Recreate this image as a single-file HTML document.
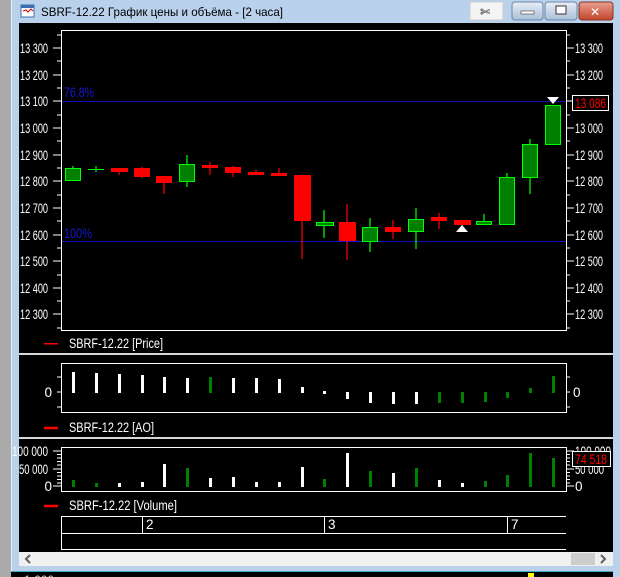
<!DOCTYPE html>
<html><head><meta charset="utf-8"><style>
html,body{margin:0;padding:0;background:#000;width:620px;height:577px;overflow:hidden}
svg{display:block}
text{font-family:"Liberation Sans","DejaVu Sans",sans-serif;font-size:12px}
.n{font-size:13.5px}
</style></head><body>
<svg width="620" height="577" viewBox="0 0 620 577" xmlns="http://www.w3.org/2000/svg">
<defs><linearGradient id="tb" x1="0" y1="0" x2="0" y2="1"><stop offset="0" stop-color="#c6d9ee"/><stop offset="1" stop-color="#b8d0ea"/></linearGradient>
<linearGradient id="bt" x1="0" y1="0" x2="0" y2="1"><stop offset="0" stop-color="#e8eef6"/><stop offset="1" stop-color="#a9bfd9"/></linearGradient>
<linearGradient id="cl" x1="0" y1="0" x2="0" y2="1"><stop offset="0" stop-color="#e8a090"/><stop offset="1" stop-color="#c2442c"/></linearGradient></defs>
<rect x="0" y="0" width="620" height="577" fill="#000"/>
<rect x="0" y="0" width="620" height="23" fill="url(#tb)"/>
<rect x="11" y="0" width="602" height="572" fill="#b9d1ea"/>
<rect x="0" y="0" width="11" height="577" fill="#ababab"/>
<rect x="11" y="0" width="1" height="572" fill="#e8f0f8"/>
<rect x="613" y="0" width="7" height="577" fill="#b9d1ea"/>
<rect x="11" y="571" width="602" height="1" fill="#3aa8c8"/>
<rect x="11" y="572" width="602" height="5" fill="#000"/>
<rect x="19" y="23" width="594" height="529" fill="#000"/>
<!-- title -->
<rect x="21" y="5" width="13" height="12" fill="#fff" stroke="#3a6fb0"/><rect x="21" y="5" width="13" height="3" fill="#3a6fb0"/>
<polyline points="23,11 26,10 28,12 31,9 33,11" fill="none" stroke="#d00" stroke-width="1"/>
<text x="41" y="16" fill="#000" textLength="242" lengthAdjust="spacingAndGlyphs">SBRF-12.22 График цены и объёма - [2 часа]</text>
<rect x="470" y="2" width="33" height="18" fill="#f4f4f4" stroke="#ccc"/>
<text x="480" y="16" fill="#000" font-size="12">✄</text>
<rect x="512" y="2" width="31" height="18" rx="3" fill="url(#bt)" stroke="#6d88a8"/><rect x="521" y="11" width="13" height="3" fill="#fff" stroke="#333" stroke-width="0.6"/>
<rect x="545" y="2" width="32" height="18" rx="3" fill="url(#bt)" stroke="#6d88a8"/><rect x="556" y="6" width="10" height="8" fill="#fff" stroke="#333"/>
<rect x="579" y="2" width="34" height="18" rx="3" fill="url(#cl)" stroke="#8a3020"/><text x="590" y="16" fill="#fff" font-weight="bold" font-size="12">✕</text>
<!-- main chart -->
<rect x="61.5" y="30.5" width="505" height="300" fill="none" stroke="#fff"/>
<g stroke="#fff">
<path d="M53 48h8M53 75h8M53 101h8M53 128h8M53 155h8M53 181h8M53 208h8M53 235h8M53 261h8M53 288h8M53 314h8M57 35h4M57 61h4M57 88h4M57 115h4M57 141h4M57 168h4M57 195h4M57 221h4M57 248h4M57 275h4M57 301h4M57 328h4"/>
<path d="M566 48h8M566 75h8M566 101h8M566 128h8M566 155h8M566 181h8M566 208h8M566 235h8M566 261h8M566 288h8M566 314h8M566 35h4M566 61h4M566 88h4M566 115h4M566 141h4M566 168h4M566 195h4M566 221h4M566 248h4M566 275h4M566 301h4M566 328h4"/>
</g>
<g fill="#fff" class="n">
<text class="n" x="20" y="53" textLength="28" lengthAdjust="spacingAndGlyphs">13 300</text><text class="n" x="20" y="80" textLength="28" lengthAdjust="spacingAndGlyphs">13 200</text><text class="n" x="20" y="106" textLength="28" lengthAdjust="spacingAndGlyphs">13 100</text><text class="n" x="20" y="133" textLength="28" lengthAdjust="spacingAndGlyphs">13 000</text><text class="n" x="20" y="160" textLength="28" lengthAdjust="spacingAndGlyphs">12 900</text><text class="n" x="20" y="186" textLength="28" lengthAdjust="spacingAndGlyphs">12 800</text><text class="n" x="20" y="213" textLength="28" lengthAdjust="spacingAndGlyphs">12 700</text><text class="n" x="20" y="240" textLength="28" lengthAdjust="spacingAndGlyphs">12 600</text><text class="n" x="20" y="266" textLength="28" lengthAdjust="spacingAndGlyphs">12 500</text><text class="n" x="20" y="293" textLength="28" lengthAdjust="spacingAndGlyphs">12 400</text><text class="n" x="20" y="319" textLength="28" lengthAdjust="spacingAndGlyphs">12 300</text>
</g>
<g fill="#fff">
<text class="n" x="575" y="53" textLength="28" lengthAdjust="spacingAndGlyphs">13 300</text><text class="n" x="575" y="80" textLength="28" lengthAdjust="spacingAndGlyphs">13 200</text><text class="n" x="575" y="133" textLength="28" lengthAdjust="spacingAndGlyphs">13 000</text><text class="n" x="575" y="160" textLength="28" lengthAdjust="spacingAndGlyphs">12 900</text><text class="n" x="575" y="186" textLength="28" lengthAdjust="spacingAndGlyphs">12 800</text><text class="n" x="575" y="213" textLength="28" lengthAdjust="spacingAndGlyphs">12 700</text><text class="n" x="575" y="240" textLength="28" lengthAdjust="spacingAndGlyphs">12 600</text><text class="n" x="575" y="266" textLength="28" lengthAdjust="spacingAndGlyphs">12 500</text><text class="n" x="575" y="293" textLength="28" lengthAdjust="spacingAndGlyphs">12 400</text><text class="n" x="575" y="319" textLength="28" lengthAdjust="spacingAndGlyphs">12 300</text>
</g>
<rect x="572.5" y="95.5" width="36" height="15" fill="#000" stroke="#fff"/><text class="n" x="575" y="108" fill="#f00" textLength="31" lengthAdjust="spacingAndGlyphs">13 086</text>
<line x1="62" y1="101.5" x2="566" y2="101.5" stroke="#1010c0"/>
<line x1="62" y1="241.5" x2="566" y2="241.5" stroke="#1010c0"/>
<text class="n" x="64" y="97" fill="#1818d0" textLength="30" lengthAdjust="spacingAndGlyphs">76.8%</text><text class="n" x="64" y="238" fill="#1818d0" textLength="28" lengthAdjust="spacingAndGlyphs">100%</text>
<!-- wicks -->
<g stroke-width="1.2">
<path stroke="#0f0" d="M73 166v15M96 166v6M187 155v32M324 210v28M370 218v34M416 208v41M484 214v10M507 173v4M530 139v55"/>
<path stroke="#f00" d="M119 168v7M142 167v11M164 176v18M210 162v13M233 166v11M256 170v4M279 168v7M302 175v84M347 204v56M393 220v19M439 213v16M462 220v5"/>
</g>
<g fill="#008000" stroke="#0f0">
<rect x="65.5" y="168.5" width="15" height="12"/><rect x="179.5" y="164.5" width="15" height="17"/><rect x="316.5" y="222.5" width="17" height="3"/><rect x="362.5" y="227.5" width="15" height="14"/><rect x="408.5" y="219.5" width="15" height="12"/><rect x="476.5" y="221.5" width="15" height="3"/><rect x="499.5" y="177.5" width="15" height="47"/><rect x="522.5" y="144.5" width="15" height="33"/><rect x="545.5" y="105.5" width="15" height="39"/>
</g>
<path stroke="#0f0" d="M88 169.5h16"/>
<g fill="#f00">
<rect x="111" y="168" width="17" height="4"/><rect x="134" y="168" width="16" height="9"/><rect x="156" y="176" width="16" height="7"/><rect x="202" y="165" width="16" height="3"/><rect x="225" y="167" width="16" height="6"/><rect x="248" y="172" width="16" height="3"/><rect x="271" y="173" width="16" height="3"/><rect x="294" y="175" width="17" height="46"/><rect x="339" y="222" width="17" height="19"/><rect x="385" y="227" width="16" height="5"/><rect x="431" y="217" width="16" height="4"/><rect x="454" y="220" width="17" height="5"/>
</g>
<polygon points="462,225 456,232 468,232" fill="#fff"/>
<polygon points="553,104 547,97 559,97" fill="#fff"/>
<rect x="44" y="343" width="14" height="1.5" fill="#ff0000" shape-rendering="crispEdges"/>
<text class="n" x="69" y="348" fill="#fff" textLength="94" lengthAdjust="spacingAndGlyphs">SBRF-12.22 [Price]</text>
<rect x="19" y="353" width="594" height="2" fill="#d8d8d8"/>
<!-- AO -->
<rect x="61.5" y="363.5" width="505" height="49" fill="none" stroke="#fff"/>
<path stroke="#fff" d="M57 392h4M57 377h4M57 407h4M566 392h4M566 377h4M566 407h4"/>
<text class="n" x="52" y="397" fill="#fff" text-anchor="end">0</text><text class="n" x="573" y="397" fill="#fff">0</text>
<g fill="#fff"><rect x="72" y="372" width="3" height="21"/><rect x="95" y="373" width="3" height="20"/><rect x="118" y="374" width="3" height="19"/><rect x="141" y="375" width="3" height="18"/><rect x="163" y="377" width="3" height="16"/><rect x="186" y="378" width="3" height="15"/><rect x="232" y="378" width="3" height="15"/><rect x="255" y="378" width="3" height="15"/><rect x="278" y="379" width="3" height="14"/><rect x="301" y="387" width="3" height="6"/><rect x="323" y="391" width="3" height="3"/><rect x="346" y="392" width="3" height="7"/><rect x="369" y="392" width="3" height="11"/><rect x="392" y="392" width="3" height="12"/><rect x="415" y="392" width="3" height="12"/></g>
<g fill="#008000"><rect x="209" y="377" width="3" height="16"/><rect x="438" y="392" width="3" height="11"/><rect x="461" y="392" width="3" height="11"/><rect x="484" y="392" width="3" height="10"/><rect x="506" y="392" width="3" height="6"/><rect x="529" y="388" width="3" height="5"/><rect x="552" y="376" width="3" height="17"/></g>
<line x1="44" y1="428" x2="58" y2="428" stroke="#f00" stroke-width="2.5"/>
<text class="n" x="69" y="432" fill="#fff" textLength="85" lengthAdjust="spacingAndGlyphs">SBRF-12.22 [AO]</text>
<rect x="19" y="437" width="594" height="2" fill="#d8d8d8"/>
<!-- Volume -->
<rect x="61.5" y="447.5" width="505" height="44" fill="none" stroke="#fff"/>
<path stroke="#fff" d="M53 451h8M53 469h8M53 486h8M57 454.5h4M57 458h4M57 461.5h4M57 465h4M57 472.5h4M57 476h4M57 479.5h4M57 483h4M566 451h8M566 469h8M566 486h8M566 454.5h4M566 458h4M566 461.5h4M566 465h4M566 472.5h4M566 476h4M566 479.5h4M566 483h4"/>
<g fill="#fff"><text class="n" x="12" y="456" textLength="36" lengthAdjust="spacingAndGlyphs">100 000</text><text class="n" x="19" y="474" textLength="29" lengthAdjust="spacingAndGlyphs">50 000</text><text class="n" x="52" y="491" text-anchor="end">0</text></g>
<g fill="#fff"><text class="n" x="575" y="474" textLength="29" lengthAdjust="spacingAndGlyphs">50 000</text><text class="n" x="575" y="491">0</text><text class="n" x="575" y="456" textLength="36" lengthAdjust="spacingAndGlyphs">100 000</text></g>
<rect x="572.5" y="451.5" width="38" height="15" fill="#000" stroke="#fff"/><text class="n" x="575" y="464" fill="#f00" textLength="32" lengthAdjust="spacingAndGlyphs">74 518</text>
<g fill="#fff"><rect x="118" y="483" width="3" height="4"/><rect x="141" y="482" width="3" height="5"/><rect x="163" y="464" width="3" height="23"/><rect x="209" y="478" width="3" height="9"/><rect x="232" y="477" width="3" height="10"/><rect x="255" y="482" width="3" height="5"/><rect x="278" y="482" width="3" height="5"/><rect x="301" y="467" width="3" height="20"/><rect x="346" y="453" width="3" height="34"/><rect x="392" y="473" width="3" height="14"/><rect x="438" y="480" width="3" height="7"/><rect x="461" y="483" width="3" height="4"/></g>
<g fill="#008000"><rect x="72" y="480" width="3" height="7"/><rect x="95" y="483" width="3" height="4"/><rect x="186" y="468" width="3" height="19"/><rect x="323" y="479" width="3" height="8"/><rect x="369" y="471" width="3" height="16"/><rect x="415" y="468" width="3" height="19"/><rect x="484" y="481" width="3" height="6"/><rect x="506" y="475" width="3" height="12"/><rect x="529" y="453" width="3" height="34"/><rect x="552" y="458" width="3" height="29"/></g>
<line x1="44" y1="506" x2="58" y2="506" stroke="#f00" stroke-width="2.5"/>
<text class="n" x="69" y="510" fill="#fff" textLength="108" lengthAdjust="spacingAndGlyphs">SBRF-12.22 [Volume]</text>
<!-- time axis -->
<path stroke="#fff" fill="none" d="M566 516.5H61.5V549.5H566M62 533.5H566M142.5 516v17M324.5 516v17M507.5 516v17"/>
<text class="n" x="146" y="529" fill="#fff">2</text><text class="n" x="328" y="529" fill="#fff">3</text><text class="n" x="511" y="529" fill="#fff">7</text>
<!-- scrollbar -->
<rect x="19" y="552" width="594" height="14" fill="#f0f0f0"/>
<rect x="571" y="553" width="24" height="12" fill="#cdcdcd"/>
<path d="M30 555l-4 4 4 4M601 555l4 4-4 4" stroke="#606060" stroke-width="2" fill="none"/>
<rect x="528" y="573" width="6" height="4" fill="#ff0"/>
<text x="24" y="584" fill="#ccc" font-size="11">1 660</text>
</svg>
</body></html>
